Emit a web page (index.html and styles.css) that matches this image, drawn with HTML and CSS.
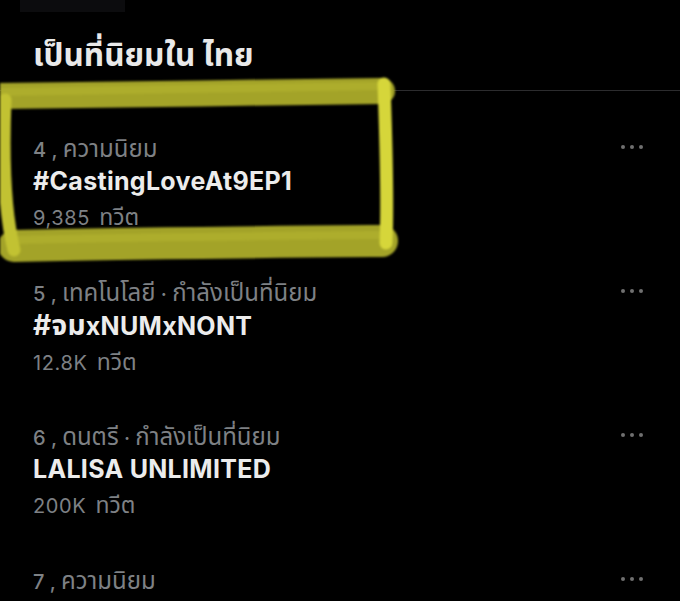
FILE: index.html
```html
<!DOCTYPE html>
<html lang="th">
<head>
<meta charset="utf-8">
<title>เป็นที่นิยมใน ไทย</title>
<link rel="stylesheet" href="styles.css">
</head>
<body>
<div class="page">
  <div class="ghost-bar"></div>
  <h1 class="header">เป็นที่นิยมใน ไทย</h1>
  <div class="list">
    <div class="trend">
      <div class="trend-text">
        <div class="meta">4 , <span class="th">ความนิยม</span></div>
        <div class="title">#CastingLoveAt9EP1</div>
        <div class="count">9,385 <span class="th">ทวีต</span></div>
      </div>
      <div class="more"><span></span><span></span><span></span></div>
    </div>
    <div class="trend">
      <div class="trend-text">
        <div class="meta">5 , <span class="th">เทคโนโลยี</span> · <span class="th">กำลังเป็นที่นิยม</span></div>
        <div class="title"><span class="th">#จม</span>xNUMxNONT</div>
        <div class="count">12.8K <span class="th">ทวีต</span></div>
      </div>
      <div class="more"><span></span><span></span><span></span></div>
    </div>
    <div class="trend">
      <div class="trend-text">
        <div class="meta">6 , <span class="th">ดนตรี</span> · <span class="th">กำลังเป็นที่นิยม</span></div>
        <div class="title">LALISA UNLIMITED</div>
        <div class="count">200K <span class="th">ทวีต</span></div>
      </div>
      <div class="more"><span></span><span></span><span></span></div>
    </div>
    <div class="trend">
      <div class="trend-text">
        <div class="meta">7 , <span class="th">ความนิยม</span></div>
      </div>
      <div class="more"><span></span><span></span><span></span></div>
    </div>
  </div>
  <svg class="marker" width="680" height="601" viewBox="0 0 680 601" aria-hidden="true">
    <path d="M0 96 C120 94 260 93 382 91" fill="none" stroke="#a3a328" stroke-width="26" stroke-linecap="round"/>
    <path d="M0 92 C120 90 260 88 382 86" fill="none" stroke="#b4b42e" stroke-width="8" stroke-linecap="round" opacity="0.6"/>
    <path d="M14 246 C130 243 260 242 382 241" fill="none" stroke="#a3a328" stroke-width="32" stroke-linecap="round"/>
    <path d="M14 240 C130 237 260 236 382 235" fill="none" stroke="#b4b42e" stroke-width="8" stroke-linecap="round" opacity="0.6"/>
    <path d="M5 100 C3 150 4 210 14 250" fill="none" stroke="#c2c232" stroke-width="13" stroke-linecap="round"/>
    <path d="M384 84 C386 140 388 200 386 243" fill="none" stroke="#d6d63a" stroke-width="13" stroke-linecap="round"/>
  </svg>
</div>
</body>
</html>
```

FILE: styles.css
```css
html, body {
  margin: 0;
  padding: 0;
  background: #000;
}
body {
  font-family: Inter, "Noto Sans Thai", "Noto Sans", "Liberation Sans", sans-serif;
  color: #e7e9ea;
  width: 680px;
  height: 601px;
  overflow: hidden;
}
.page {
  position: relative;
  width: 680px;
  height: 601px;
  overflow: hidden;
}
.ghost-bar {
  width: 105px;
  height: 12px;
  margin-left: 20px;
  background: #0c0c0e;
}
.header {
  margin: 0;
  padding: 21px 33px 0;
  height: 57px;
  font-size: 31.5px;
  font-weight: 700;
  line-height: 44px;
  color: #e9e9e9;
  border-bottom: 1px solid #2c2c2e;
}
.list {
  display: flex;
  flex-direction: column;
}
.trend {
  display: flex;
  justify-content: space-between;
  align-items: flex-start;
  padding: 44px 37px 0 33px;
  height: 100px;
}
.trend-text {
  display: flex;
  flex-direction: column;
}
.th {
  font-size: 1.2em;
}
.meta {
  font-size: 20px;
  font-weight: 500;
  line-height: 28px;
  color: #7e8185;
}
.meta .th {
  font-weight: 400;
}
.title {
  font-size: 25px;
  font-weight: 700;
  line-height: 35px;
  letter-spacing: 0.3px;
  color: #ececec;
}
.title .th {
  font-size: 1.12em;
}
.count {
  font-size: 20px;
  line-height: 37px;
  letter-spacing: 0.6px;
  color: #7e8185;
}
.count .th {
  font-size: 1.15em;
  letter-spacing: 0;
  margin-left: 3px;
}
.more {
  display: flex;
  gap: 5px;
  padding-top: 10px;
}
.more span {
  width: 4px;
  height: 4px;
  border-radius: 50%;
  background: #707070;
}
.marker {
  position: absolute;
  left: 0;
  top: 0;
  pointer-events: none;
  filter: blur(0.8px);
}
```
